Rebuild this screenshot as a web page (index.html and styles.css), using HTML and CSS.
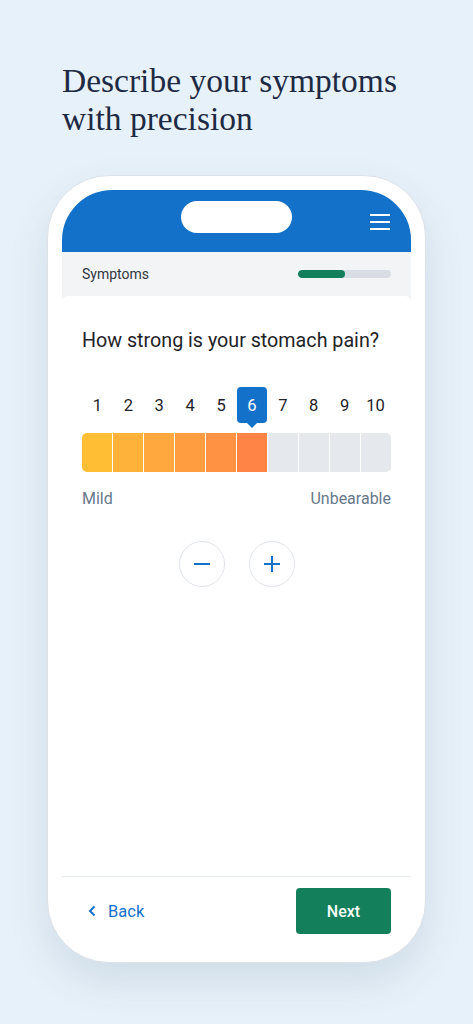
FILE: index.html
```html
<!DOCTYPE html>
<html lang="en">
<head>
<meta charset="utf-8">
<link rel="stylesheet" href="styles.css">
</head>
<body>
<h1 class="title">Describe your symptoms<br>with precision</h1>
<div class="phone">
  <div class="screen">
    <header class="appbar">
      <span></span>
      <div class="pill"></div>
      <div class="menu"><i></i><i></i><i></i></div>
    </header>
    <div class="subbar">
      <span class="section">Symptoms</span>
      <div class="progress"><div class="progress-fill"></div></div>
    </div>
    <main class="content">
      <p class="question">How strong is your stomach pain?</p>
      <div class="scale">
        <div class="nums">
          <span>1</span><span>2</span><span>3</span><span>4</span><span>5</span>
          <span class="active">6</span><span>7</span><span>8</span><span>9</span><span>10</span>
        </div>
        <div class="bar">
          <span class="s1"></span><span class="s2"></span><span class="s3"></span><span class="s4"></span><span class="s5"></span><span class="s6"></span><span></span><span></span><span></span><span></span>
        </div>
        <div class="labels"><span>Mild</span><span>Unbearable</span></div>
      </div>
      <div class="steppers">
        <button class="circle" aria-label="decrease"><svg width="18" height="18" viewBox="0 0 18 18"><path d="M1 9h16" stroke="#1471c9" stroke-width="2"/></svg></button>
        <button class="circle" aria-label="increase"><svg width="18" height="18" viewBox="0 0 18 18"><path d="M1 9h16M9 1v16" stroke="#1471c9" stroke-width="2"/></svg></button>
      </div>
    </main>
    <footer class="footer">
      <a class="back"><svg width="8" height="12" viewBox="0 0 8 12"><path d="M6.5 1.5 2 6l4.5 4.5" fill="none" stroke="#1471c9" stroke-width="2"/></svg>Back</a>
      <button class="next">Next</button>
    </footer>
  </div>
</div>
</body>
</html>
```
FILE: styles.css
```css
* { box-sizing: border-box; }
html, body { margin: 0; padding: 0; }
body {
  background: #e7f1f9;
  font-family: Roboto, "Liberation Sans", sans-serif;
  width: 473px;
  height: 1024px;
  overflow: hidden;
}
.title {
  margin: 0;
  padding: 62px 0 0 62px;
  font-family: "Liberation Serif", "DejaVu Serif", serif;
  font-weight: 400;
  font-size: 33.5px;
  line-height: 38px;
  color: #1e2a44;
}
.phone {
  margin: 37px 0 0 47px;
  width: 379px;
  height: 788px;
  background: #fff;
  border: 1px solid #dde2e8;
  border-radius: 62px;
  padding: 14px;
  box-shadow: 0 18px 40px rgba(40, 70, 110, 0.12);
}
.screen {
  height: 100%;
  display: flex;
  flex-direction: column;
  border-radius: 50px 50px 48px 48px;
  overflow: hidden;
  background: #fff;
}
.appbar {
  height: 62px;
  background: #1471c9;
  display: grid;
  grid-template-columns: 1fr auto 1fr;
  align-items: start;
  flex: none;
}
.pill {
  margin-top: 11px;
  width: 111px;
  height: 32px;
  border-radius: 16px;
  background: #fff;
}
.menu {
  justify-self: end;
  margin: 24px 21px 0 0;
  width: 20px;
  display: flex;
  flex-direction: column;
  gap: 5px;
}
.menu i {
  display: block;
  height: 2px;
  background: #fff;
}
.subbar {
  height: 50px;
  flex: none;
  display: flex;
  align-items: flex-start;
  justify-content: space-between;
  padding: 13px 20px 0;
  background: #f3f4f6;
  margin-bottom: -6px;
}
.section { font-size: 14px; line-height: 18px; color: #2f3640; }
.progress {
  margin-top: 5px;
  width: 93px;
  height: 8px;
  border-radius: 4px;
  background: #d7dde3;
  overflow: hidden;
}
.progress-fill { width: 47px; height: 100%; background: #137f5b; border-radius: 4px; }
.content {
  flex: 1;
  background: #fff;
  border-radius: 6px 6px 0 0;
  padding: 32px 20px 0;
  position: relative;
}
.question {
  margin: 0;
  font-size: 19.7px;
  line-height: 26px;
  color: #1f2328;
}
.scale { margin-top: 33px; }
.nums {
  display: grid;
  grid-template-columns: repeat(10, 1fr);
  height: 46px;
}
.nums span {
  justify-self: center;
  width: 30px;
  height: 36px;
  display: flex;
  align-items: center;
  justify-content: center;
  font-size: 16.5px;
  color: #1f2328;
  border-radius: 4px;
  position: relative;
}
.nums .active { background: #1471c9; color: #fff; }
.nums .active::after {
  content: "";
  position: absolute;
  left: 50%;
  bottom: -5px;
  margin-left: -5px;
  border-left: 5px solid transparent;
  border-right: 5px solid transparent;
  border-top: 5px solid #1471c9;
}
.bar {
  display: grid;
  grid-template-columns: repeat(10, 1fr);
  gap: 1px;
  height: 39px;
  border-radius: 5px;
  overflow: hidden;
  background: #fff;
}
.bar span { background: #e5e8ec; }
.bar .s1 { background: #ffbe34; }
.bar .s2 { background: #ffb23a; }
.bar .s3 { background: #ffa83e; }
.bar .s4 { background: #ff9d40; }
.bar .s5 { background: #ff9243; }
.bar .s6 { background: #ff8446; }
.labels {
  display: flex;
  justify-content: space-between;
  margin-top: 17px;
  font-size: 16px;
  line-height: 20px;
  color: #67788a;
}
.steppers {
  display: flex;
  justify-content: center;
  gap: 24px;
  margin-top: 32px;
}
.circle {
  width: 46px;
  height: 46px;
  border-radius: 50%;
  border: 1px solid #dfe3e8;
  background: #fff;
  display: flex;
  align-items: center;
  justify-content: center;
  padding: 0;
}
.footer {
  flex: none;
  background: #fff;
  border-top: 1px solid #e6ebf0;
  padding: 11px 20px 14px 26px;
  display: flex;
  align-items: center;
  justify-content: space-between;
}
.back {
  display: flex;
  align-items: center;
  gap: 12px;
  font-size: 16.5px;
  color: #1471c9;
}
.next {
  width: 95px;
  height: 46px;
  border: none;
  border-radius: 4px;
  background: #137f5b;
  color: #fff;
  font-family: Roboto, "Liberation Sans", sans-serif;
  font-size: 16px;
  font-weight: 500;
}
```
